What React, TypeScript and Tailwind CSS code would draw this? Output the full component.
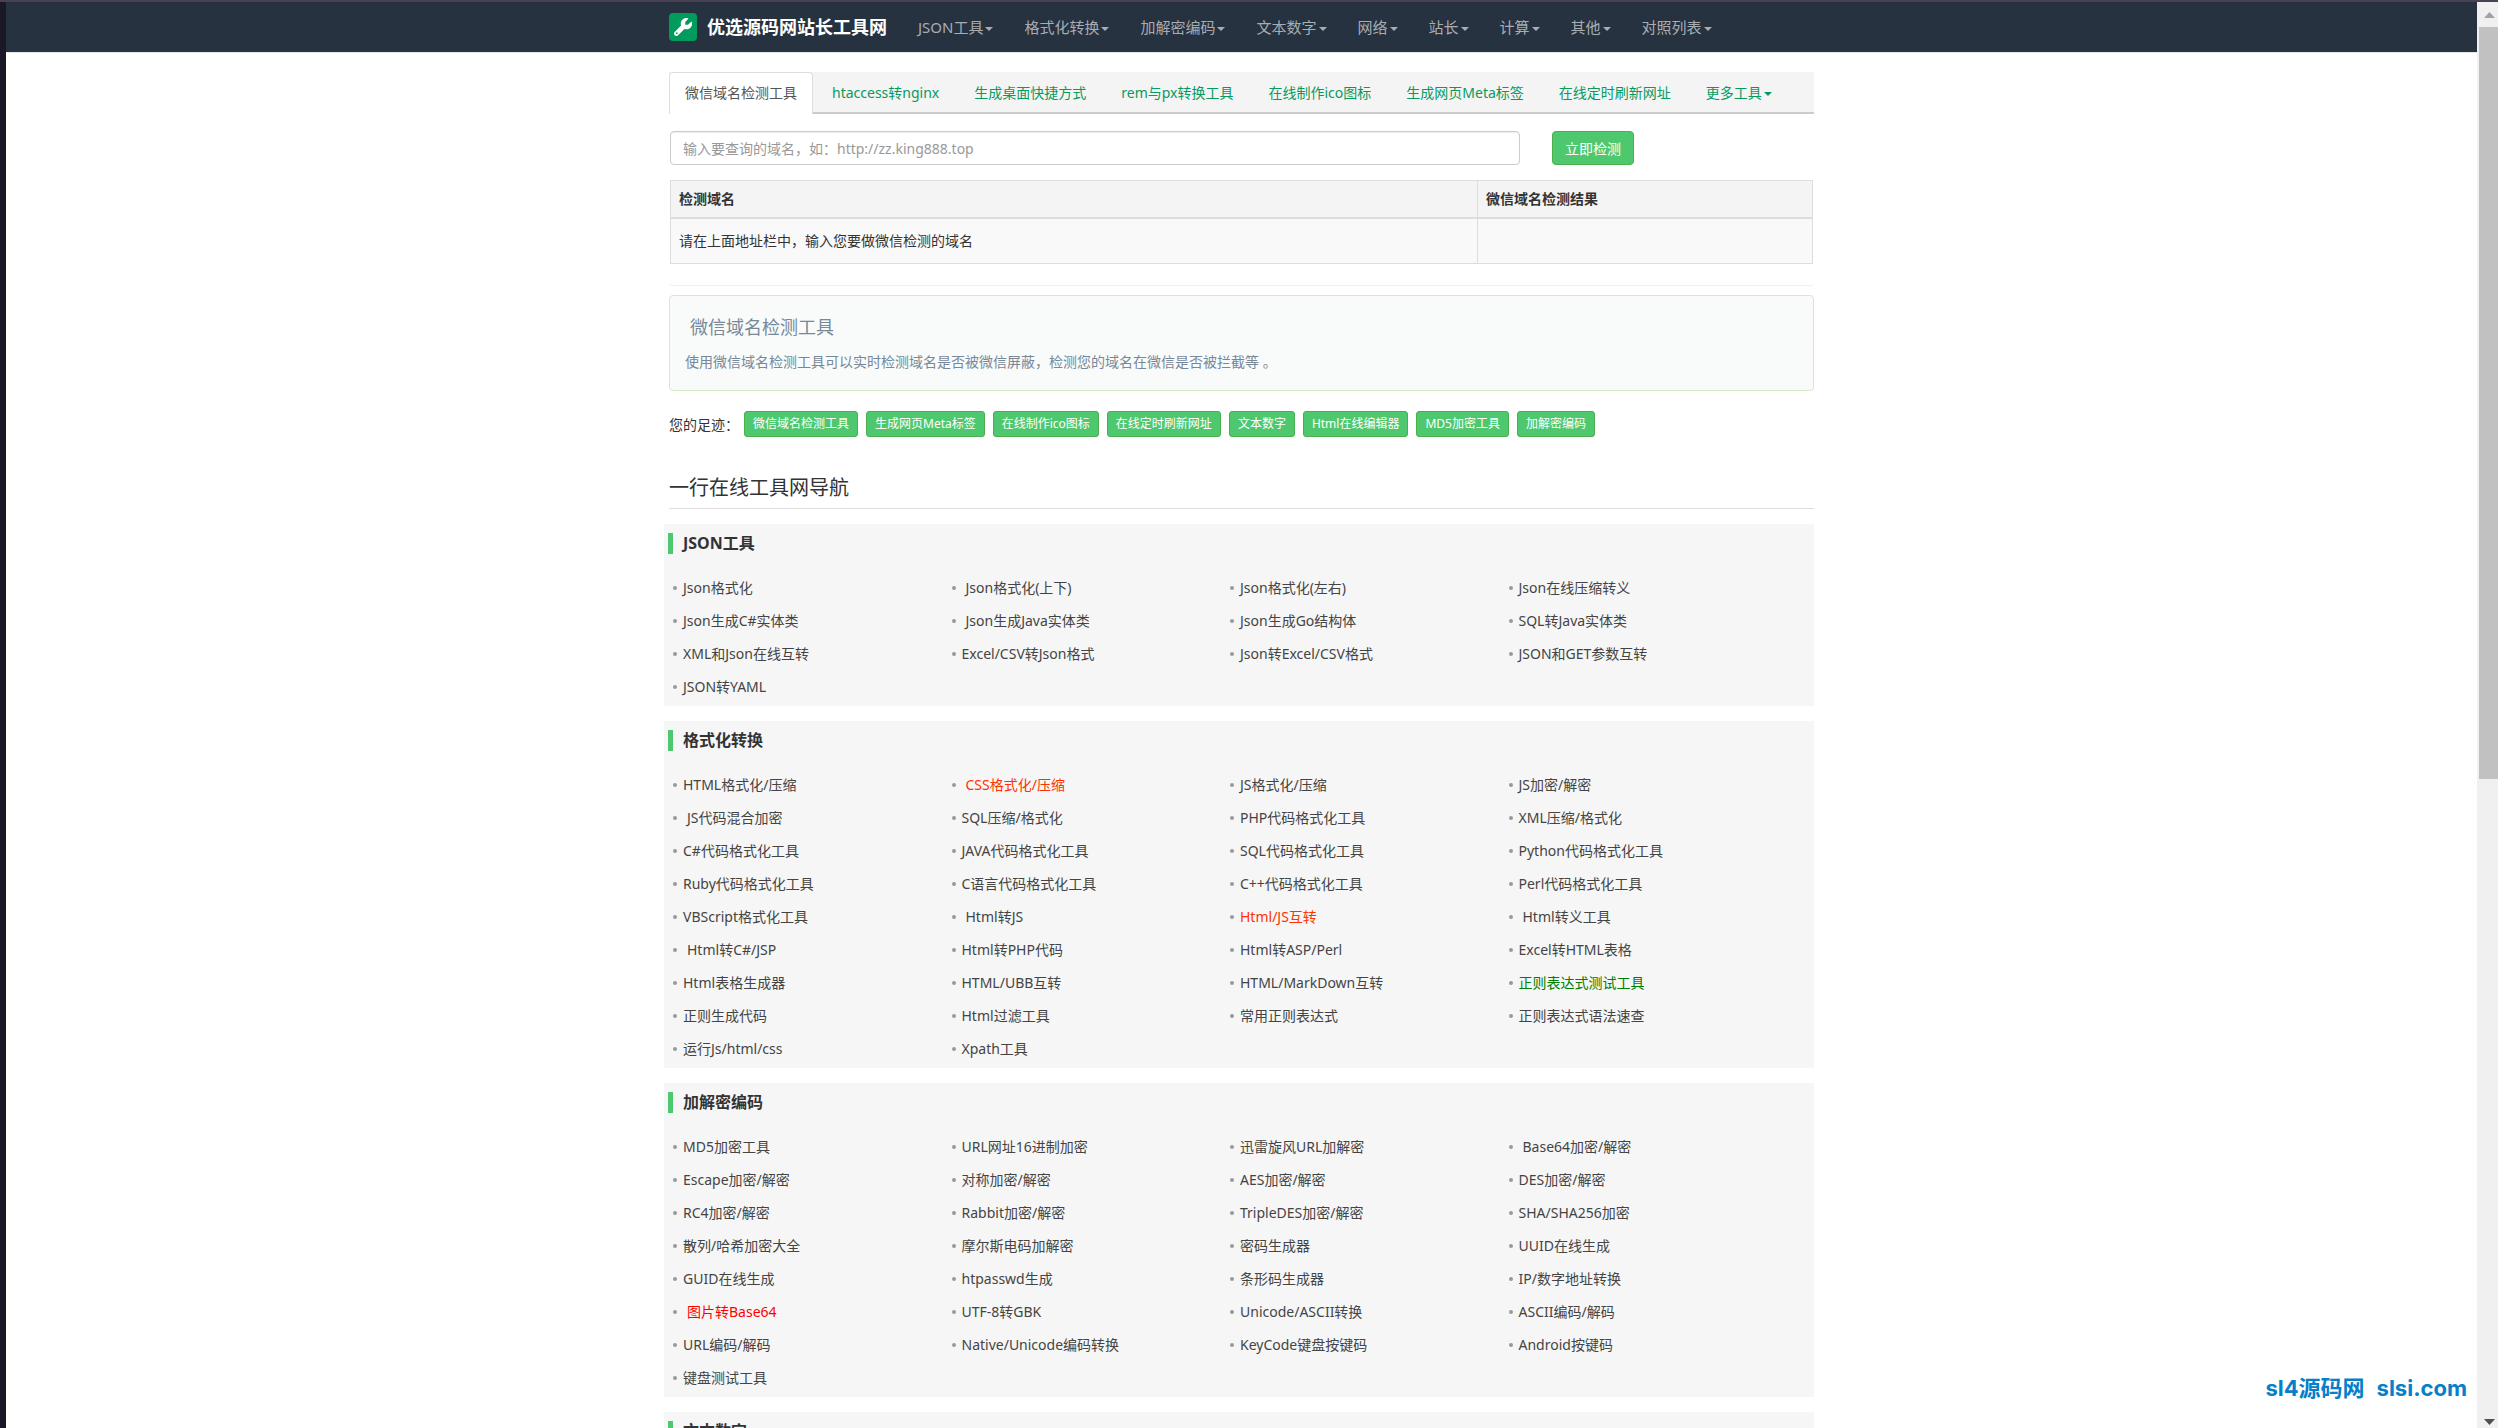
import React from 'react';
import { FaWrench } from 'react-icons/fa6';
import clsx from 'clsx';

type Tone = 'red' | 'orange' | 'green';

interface Tool {
  name: string;
  tone?: Tone;
  spaced?: boolean;
}

interface Category {
  title: string;
  tools: Tool[];
}

const navItems = ['JSON工具', '格式化转换', '加解密编码', '文本数字', '网络', '站长', '计算', '其他', '对照列表'];

const tabs = [
  'htaccess转nginx',
  '生成桌面快捷方式',
  'rem与px转换工具',
  '在线制作ico图标',
  '生成网页Meta标签',
  '在线定时刷新网址',
];

const footprints = [
  '微信域名检测工具',
  '生成网页Meta标签',
  '在线制作ico图标',
  '在线定时刷新网址',
  '文本数字',
  'Html在线编辑器',
  'MD5加密工具',
  '加解密编码',
];

const categories: Category[] = [
  {
    title: 'JSON工具',
    tools: [
      { name: 'Json格式化' },
      { name: 'Json格式化(上下)', spaced: true },
      { name: 'Json格式化(左右)' },
      { name: 'Json在线压缩转义' },
      { name: 'Json生成C#实体类' },
      { name: 'Json生成Java实体类', spaced: true },
      { name: 'Json生成Go结构体' },
      { name: 'SQL转Java实体类' },
      { name: 'XML和Json在线互转' },
      { name: 'Excel/CSV转Json格式' },
      { name: 'Json转Excel/CSV格式' },
      { name: 'JSON和GET参数互转' },
      { name: 'JSON转YAML' },
    ],
  },
  {
    title: '格式化转换',
    tools: [
      { name: 'HTML格式化/压缩' },
      { name: 'CSS格式化/压缩', tone: 'orange', spaced: true },
      { name: 'JS格式化/压缩' },
      { name: 'JS加密/解密' },
      { name: 'JS代码混合加密', spaced: true },
      { name: 'SQL压缩/格式化' },
      { name: 'PHP代码格式化工具' },
      { name: 'XML压缩/格式化' },
      { name: 'C#代码格式化工具' },
      { name: 'JAVA代码格式化工具' },
      { name: 'SQL代码格式化工具' },
      { name: 'Python代码格式化工具' },
      { name: 'Ruby代码格式化工具' },
      { name: 'C语言代码格式化工具' },
      { name: 'C++代码格式化工具' },
      { name: 'Perl代码格式化工具' },
      { name: 'VBScript格式化工具' },
      { name: 'Html转JS', spaced: true },
      { name: 'Html/JS互转', tone: 'orange' },
      { name: 'Html转义工具', spaced: true },
      { name: 'Html转C#/JSP', spaced: true },
      { name: 'Html转PHP代码' },
      { name: 'Html转ASP/Perl' },
      { name: 'Excel转HTML表格' },
      { name: 'Html表格生成器' },
      { name: 'HTML/UBB互转' },
      { name: 'HTML/MarkDown互转' },
      { name: '正则表达式测试工具', tone: 'green' },
      { name: '正则生成代码' },
      { name: 'Html过滤工具' },
      { name: '常用正则表达式' },
      { name: '正则表达式语法速查' },
      { name: '运行Js/html/css' },
      { name: 'Xpath工具' },
    ],
  },
  {
    title: '加解密编码',
    tools: [
      { name: 'MD5加密工具' },
      { name: 'URL网址16进制加密' },
      { name: '迅雷旋风URL加解密' },
      { name: 'Base64加密/解密', spaced: true },
      { name: 'Escape加密/解密' },
      { name: '对称加密/解密' },
      { name: 'AES加密/解密' },
      { name: 'DES加密/解密' },
      { name: 'RC4加密/解密' },
      { name: 'Rabbit加密/解密' },
      { name: 'TripleDES加密/解密' },
      { name: 'SHA/SHA256加密' },
      { name: '散列/哈希加密大全' },
      { name: '摩尔斯电码加解密' },
      { name: '密码生成器' },
      { name: 'UUID在线生成' },
      { name: 'GUID在线生成' },
      { name: 'htpasswd生成' },
      { name: '条形码生成器' },
      { name: 'IP/数字地址转换' },
      { name: '图片转Base64', tone: 'red', spaced: true },
      { name: 'UTF-8转GBK' },
      { name: 'Unicode/ASCII转换' },
      { name: 'ASCII编码/解码' },
      { name: 'URL编码/解码' },
      { name: 'Native/Unicode编码转换' },
      { name: 'KeyCode键盘按键码' },
      { name: 'Android按键码' },
      { name: '键盘测试工具' },
    ],
  },
  { title: '文本数字', tools: [] },
];

function Caret() {
  return (
    <span className="ml-[2px] inline-block h-0 w-0 border-x-4 border-t-4 border-x-transparent border-t-current align-middle" />
  );
}

function Navbar() {
  return (
    <header className="border-b border-[#e7e7e7] bg-[#263240]">
      <div className="mx-auto flex h-[50px] max-w-[1145px] items-center">
        <a href="#" className="mr-4 flex items-center gap-[10px]">
          <span className="flex h-7 w-7 items-center justify-center rounded bg-[#009c5e]">
            <FaWrench className="text-[18px] text-white" />
          </span>
          <span className="text-[18px] font-bold text-white">优选源码网站长工具网</span>
        </a>
        <nav className="flex gap-px">
          {navItems.map((item) => (
            <a key={item} href="#" className="px-[15px] text-[15px] leading-[50px] whitespace-nowrap text-[#a9adb2]">
              {item}
              <Caret />
            </a>
          ))}
        </nav>
      </div>
    </header>
  );
}

function TabBar() {
  return (
    <nav className="flex h-[42px] gap-[3px] border-b-2 border-[#cccccc] bg-[#f4f4f4] leading-5 whitespace-nowrap">
      <a
        href="#"
        className="h-[42px] rounded-t border border-b-0 border-[#dddddd] bg-white px-[15px] py-[10px] text-[#555555]"
      >
        微信域名检测工具
      </a>
      {tabs.map((tab) => (
        <a key={tab} href="#" className="border border-transparent px-[15px] py-[10px] text-[#079a60]">
          {tab}
        </a>
      ))}
      <a href="#" className="border border-transparent px-[15px] py-[10px] text-[#079a60]">
        更多工具
        <Caret />
      </a>
    </nav>
  );
}

function CheckForm() {
  const [domain, setDomain] = React.useState<string>('');

  return (
    <div className="rounded-b border-b border-[#f0f0f0] px-px pt-[17px] pb-[21px]">
      <form className="flex gap-8" onSubmit={(e) => e.preventDefault()}>
        <input
          type="text"
          aria-label="域名"
          value={domain}
          onChange={(e) => setDomain(e.target.value)}
          placeholder="输入要查询的域名，如：http://zz.king888.top"
          className="h-[34px] w-[850px] rounded border border-[#cccccc] px-3 shadow-[inset_0_1px_1px_rgba(0,0,0,0.075)] outline-0 placeholder:text-[#999999]"
        />
        <button type="submit" className="h-[34px] rounded border border-[#4cae4c] bg-[#4ec86e] px-3 text-white">
          立即检测
        </button>
      </form>
      <table className="mt-[15px] w-full border-collapse border border-[#dddddd] text-left leading-5">
        <thead>
          <tr className="h-[37px] border-b-2 border-[#dddddd] bg-[#f4f4f4]">
            <th className="border-r border-[#dddddd] px-2">检测域名</th>
            <th className="w-[335px] px-2">微信域名检测结果</th>
          </tr>
        </thead>
        <tbody>
          <tr className="h-[46px] bg-[#f9f9f9]">
            <td className="border-r border-[#dddddd] px-2">请在上面地址栏中，输入您要做微信检测的域名</td>
            <td className="px-2" />
          </tr>
        </tbody>
      </table>
    </div>
  );
}

function Footprints() {
  return (
    <div className="mt-5 flex h-[26px] items-center gap-2">
      <span className="-mr-[3px]">您的足迹：</span>
      {footprints.map((item) => (
        <a
          key={item}
          href="#"
          className="rounded-[3px] border border-[#4cae4c] bg-[#4ec86e] px-2 text-[12px] leading-6 text-white"
        >
          {item}
        </a>
      ))}
    </div>
  );
}

function ToolSection({ title, tools }: Category) {
  return (
    <section className="-ml-[5px] mb-[15px] bg-[#f6f6f6] pt-[9px] pb-[3px]">
      <h3 className="ml-1 border-l-[5px] border-[#4ec86e] pl-[10px] text-[16px] leading-[21px] font-bold">{title}</h3>
      <ul className="mt-[17px] grid grid-cols-4 pr-[27px] pl-[9px]">
        {tools.map((tool) => (
          <li key={tool.name} className="flex h-[33px] items-center">
            <span className="mr-[6px] h-1 w-1 rounded-full bg-[#999999]" />
            <a
              href="#"
              className={clsx(
                tool.spaced && 'pl-1',
                !tool.tone && 'text-[#444444]',
                tool.tone === 'orange' && 'text-[#ff3300]',
                tool.tone === 'red' && 'text-[#ff0000]',
                tool.tone === 'green' && 'text-[#008000]',
              )}
            >
              {tool.name}
            </a>
          </li>
        ))}
      </ul>
    </section>
  );
}

function Scrollbar() {
  return (
    <div className="flex w-[21px] shrink-0 flex-col bg-[#f0f0f0] pl-[2px]">
      <svg className="h-[25px] w-full shrink-0" viewBox="0 0 19 25">
        <path d="M5 16h11l-5.500-6z" fill="#a3a3a3" />
      </svg>
      <div className="h-[52.7%] bg-[#c1c1c1]" />
      <svg className="mt-auto h-[17px] w-full shrink-0" viewBox="0 0 19 17">
        <path d="M5 8h11l-5.500 6z" fill="#505050" />
      </svg>
    </div>
  );
}

export default function App() {
  return (
    <div className="flex h-screen flex-col overflow-hidden bg-[#4a4254] pt-[2px] font-['Noto_Sans','Noto_Sans_CJK_SC',sans-serif] text-[14px] text-[#333333]">
      <div className="flex min-h-0 flex-1">
        <div className="w-[6px] shrink-0 bg-[#1a1726]" />
        <div className="relative min-w-0 flex-1 overflow-hidden bg-white">
          <Navbar />
          <main className="mx-auto mt-[19px] max-w-[1145px]">
            <TabBar />
            <CheckForm />
            <div className="mt-[9px] rounded border border-[#d6e9c6] bg-[#f9fbfa] px-[15px] pt-5 pb-[18px] text-[#778899]">
              <h1 className="pl-[5px] text-[18px] leading-[22px]">微信域名检测工具</h1>
              <p className="mt-[14px] leading-5">
                使用微信域名检测工具可以实时检测域名是否被微信屏蔽，检测您的域名在微信是否被拦截等 。
              </p>
            </div>
            <Footprints />
            <h2 className="mt-[35px] mb-[15px] border-b border-[#dddddd] pb-1 text-[20px] leading-8">
              一行在线工具网导航
            </h2>
            {categories.map((category) => (
              <ToolSection key={category.title} {...category} />
            ))}
          </main>
          <div className="absolute right-[10px] bottom-6 flex gap-3 font-['Inter','Noto_Sans_CJK_SC',sans-serif] text-[22px] leading-8 font-bold text-[#0580c9]">
            <span>sl4源码网</span>
            <span>slsi.com</span>
          </div>
        </div>
        <Scrollbar />
      </div>
    </div>
  );
}
